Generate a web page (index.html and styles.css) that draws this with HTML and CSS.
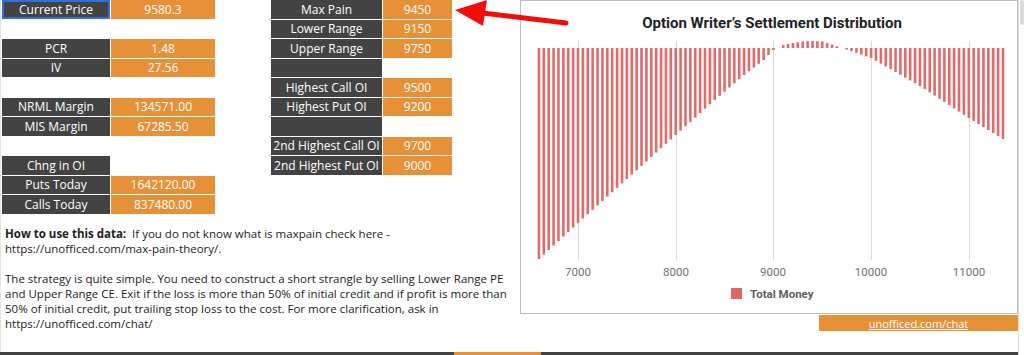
FILE: index.html
```html
<!DOCTYPE html>
<html lang="en">
<head>
<meta charset="utf-8">
<title>Max Pain</title>
<link rel="stylesheet" href="styles.css">
</head>
<body>
<div class="page">
  <div class="sheet">
    <div class="main">
      <div class="left">
        <div class="tables">
          <div class="grid g1">
            <div class="cell lab sel">Current Price</div><div class="cell val">9580.3</div>
            <div class="cell"></div><div class="cell"></div>
            <div class="cell lab">PCR</div><div class="cell val">1.48</div>
            <div class="cell lab">IV</div><div class="cell val">27.56</div>
            <div class="cell"></div><div class="cell"></div>
            <div class="cell lab">NRML Margin</div><div class="cell val">134571.00</div>
            <div class="cell lab">MIS Margin</div><div class="cell val">67285.50</div>
            <div class="cell"></div><div class="cell"></div>
            <div class="cell lab">Chng in OI</div><div class="cell"></div>
            <div class="cell lab">Puts Today</div><div class="cell val">1642120.00</div>
            <div class="cell lab">Calls Today</div><div class="cell val">837480.00</div>
          </div>
          <div class="grid g2">
            <div class="cell lab">Max Pain</div><div class="cell val">9450</div>
            <div class="cell lab">Lower Range</div><div class="cell val">9150</div>
            <div class="cell lab">Upper Range</div><div class="cell val">9750</div>
            <div class="cell lab"></div><div class="cell"></div>
            <div class="cell lab">Highest Call OI</div><div class="cell val">9500</div>
            <div class="cell lab">Highest Put OI</div><div class="cell val">9200</div>
            <div class="cell lab"></div><div class="cell"></div>
            <div class="cell lab">2nd Highest Call OI</div><div class="cell val">9700</div>
            <div class="cell lab">2nd Highest Put OI</div><div class="cell val">9000</div>
          </div>
        </div>
        <div class="notes">
          <p><b>How to use this data:</b>&nbsp; If you do not know what is maxpain check here -<br>https://unofficed.com/max-pain-theory/.</p>
          <p>The strategy is quite simple. You need to construct a short strangle by selling Lower Range PE<br>and Upper Range CE. Exit if the loss is more than 50% of initial credit and if profit is more than<br>50% of initial credit, put trailing stop loss to the cost. For more clarification, ask in<br>https://unofficed.com/chat/</p>
        </div>
      </div>
      <div class="right">
        <div class="chart">
          <svg class="plot" width="496" height="312" viewBox="0 0 496 312">
            <text class="title" x="251" y="27" text-anchor="middle">Option Writer’s Settlement Distribution</text>
            <g class="grid-lines">
              <line x1="57.5" y1="40" x2="57.5" y2="259"/>
              <line x1="155.5" y1="40" x2="155.5" y2="259"/>
              <line x1="252.5" y1="40" x2="252.5" y2="259"/>
              <line x1="350.5" y1="40" x2="350.5" y2="259"/>
              <line x1="448.5" y1="40" x2="448.5" y2="259"/>
            </g>
            <g id="bars" class="bars"></g>
            <g class="axis">
              <text x="57" y="275" text-anchor="middle">7000</text>
              <text x="155" y="275" text-anchor="middle">8000</text>
              <text x="252" y="275" text-anchor="middle">9000</text>
              <text x="350" y="275" text-anchor="middle">10000</text>
              <text x="448" y="275" text-anchor="middle">11000</text>
            </g>
            <rect class="swatch" x="210" y="287" width="11" height="11"/>
            <text class="legend" x="229" y="297">Total Money</text>
          </svg>
        </div>
        <a class="chatlink" href="#">unofficed.com/chat</a>
      </div>
    </div>
    <div class="footer">
      <div class="fdark fa"></div>
      <div class="forange"></div>
      <div class="fdark fb"></div>
    </div>
  </div>
  <div class="gutter"><div class="thumb"></div></div>
  <svg class="arrow" width="130" height="30" viewBox="440 -5 130 30">
    <line x1="478" y1="7.5" x2="566" y2="18" stroke="#f20d0d" stroke-width="5" stroke-linecap="round"/>
    <polygon points="455,5 487,-5 483,21" fill="#f20d0d"/>
  </svg>
</div>
<script src="script.js"></script>
</body>
</html>
```

FILE: styles.css
```css
html, body {
  margin: 0;
  padding: 0;
  background: #fff;
  overflow: hidden;
}

.page {
  position: relative;
  display: flex;
  width: 1024px;
  height: 355px;
  overflow: hidden;
}

.sheet {
  width: 1018px;
  display: flex;
  flex-direction: column;
}

.main {
  display: flex;
  height: 352px;
  flex: none;
}

.left {
  width: 520px;
  box-sizing: border-box;
  border-left: 1px solid #e3e3e3;
  padding-left: 1px;
}

.tables {
  display: flex;
  align-items: flex-start;
  gap: 56px;
}

.grid {
  display: grid;
  grid-auto-rows: 18.5px;
  row-gap: 1px;
  column-gap: 1px;
  font-family: "Open Sans", "DejaVu Sans", sans-serif;
  font-size: 12px;
  color: #fff;
}

.g1 { grid-template-columns: 108px 104px; }
.g2 { grid-template-columns: 111px 69px; }

.cell {
  display: flex;
  align-items: center;
  justify-content: center;
  white-space: nowrap;
}

.lab { background: #434343; }
.val { background: #e69138; }
.sel { box-shadow: inset 0 0 0 2px #2f6fe0; }

.notes {
  margin-top: 12px;
  padding-left: 3px;
  font-family: "Open Sans", "DejaVu Sans", sans-serif;
  font-size: 11.5px;
  line-height: 15px;
  color: #222;
  white-space: nowrap;
}

.notes p { margin: 0 0 15px 0; }

.right {
  width: 498px;
  display: flex;
  flex-direction: column;
  align-items: flex-end;
}

.chart {
  width: 498px;
  height: 314px;
  box-sizing: border-box;
  border: 1px solid #bcbcbc;
}

.plot { display: block; }

.title {
  font-family: Roboto, "Liberation Sans", sans-serif;
  font-weight: 700;
  font-size: 15px;
  fill: #222;
}

.grid-lines line {
  stroke: #dadada;
  stroke-width: 1;
}

.bars rect { fill: #e46a6a; }

.axis text {
  font-family: Roboto, "Liberation Sans", sans-serif;
  font-size: 11.5px;
  fill: #707070;
}

.swatch { fill: #e06666; }

.legend {
  font-family: Roboto, "Liberation Sans", sans-serif;
  font-weight: 700;
  font-size: 11.5px;
  fill: #5e5e5e;
}

.chatlink {
  width: 199px;
  height: 16px;
  margin-top: 1px;
  background: #e69138;
  color: #fff;
  text-decoration: underline;
  font-family: "Open Sans", "DejaVu Sans", sans-serif;
  font-size: 11px;
  display: flex;
  align-items: center;
  justify-content: center;
}

.footer {
  display: flex;
  height: 20px;
  flex: none;
}

.fdark { background: #434343; }
.fa { width: 454px; }
.forange { width: 87px; background: #e69138; }
.fb { flex: 1; }

.gutter {
  width: 6px;
  box-sizing: border-box;
  border-left: 1px solid #dcdcdc;
  padding-left: 1px;
}

.thumb {
  width: 4px;
  height: 25px;
  background: #dadada;
  border-radius: 2px;
}

.arrow {
  position: absolute;
  left: 440px;
  top: 0;
}
```

FILE: script.js
```js
(function () {
  var pts = [
    [6600, -211], [7000, -175], [8000, -87], [8400, -52], [8700, -27],
    [8900, -12], [9000, -2], [9100, 3], [9200, 5], [9300, 6.5], [9400, 7],
    [9500, 6.5], [9600, 3.5], [9700, 0], [9800, -3], [10000, -10],
    [10500, -38], [11000, -70], [11350, -91]
  ];
  function val(s) {
    for (var i = 0; i < pts.length - 1; i++) {
      var a = pts[i], b = pts[i + 1];
      if (s >= a[0] && s <= b[0]) {
        return a[1] + (b[1] - a[1]) * (s - a[0]) / (b[0] - a[0]);
      }
    }
    return 0;
  }
  var g = document.getElementById('bars');
  var ns = 'http://www.w3.org/2000/svg';
  var base = 47;
  for (var s = 6600; s <= 11350; s += 50) {
    var v = val(s);
    var x = 57 + (s - 7000) * 0.0977;
    var h = Math.abs(v);
    if (h < 0.8) continue;
    var r = document.createElementNS(ns, 'rect');
    r.setAttribute('x', (x - 1.3).toFixed(2));
    r.setAttribute('width', '2.6');
    r.setAttribute('y', (v > 0 ? base - v : base).toFixed(2));
    r.setAttribute('height', h.toFixed(2));
    g.appendChild(r);
  }
})();
```
